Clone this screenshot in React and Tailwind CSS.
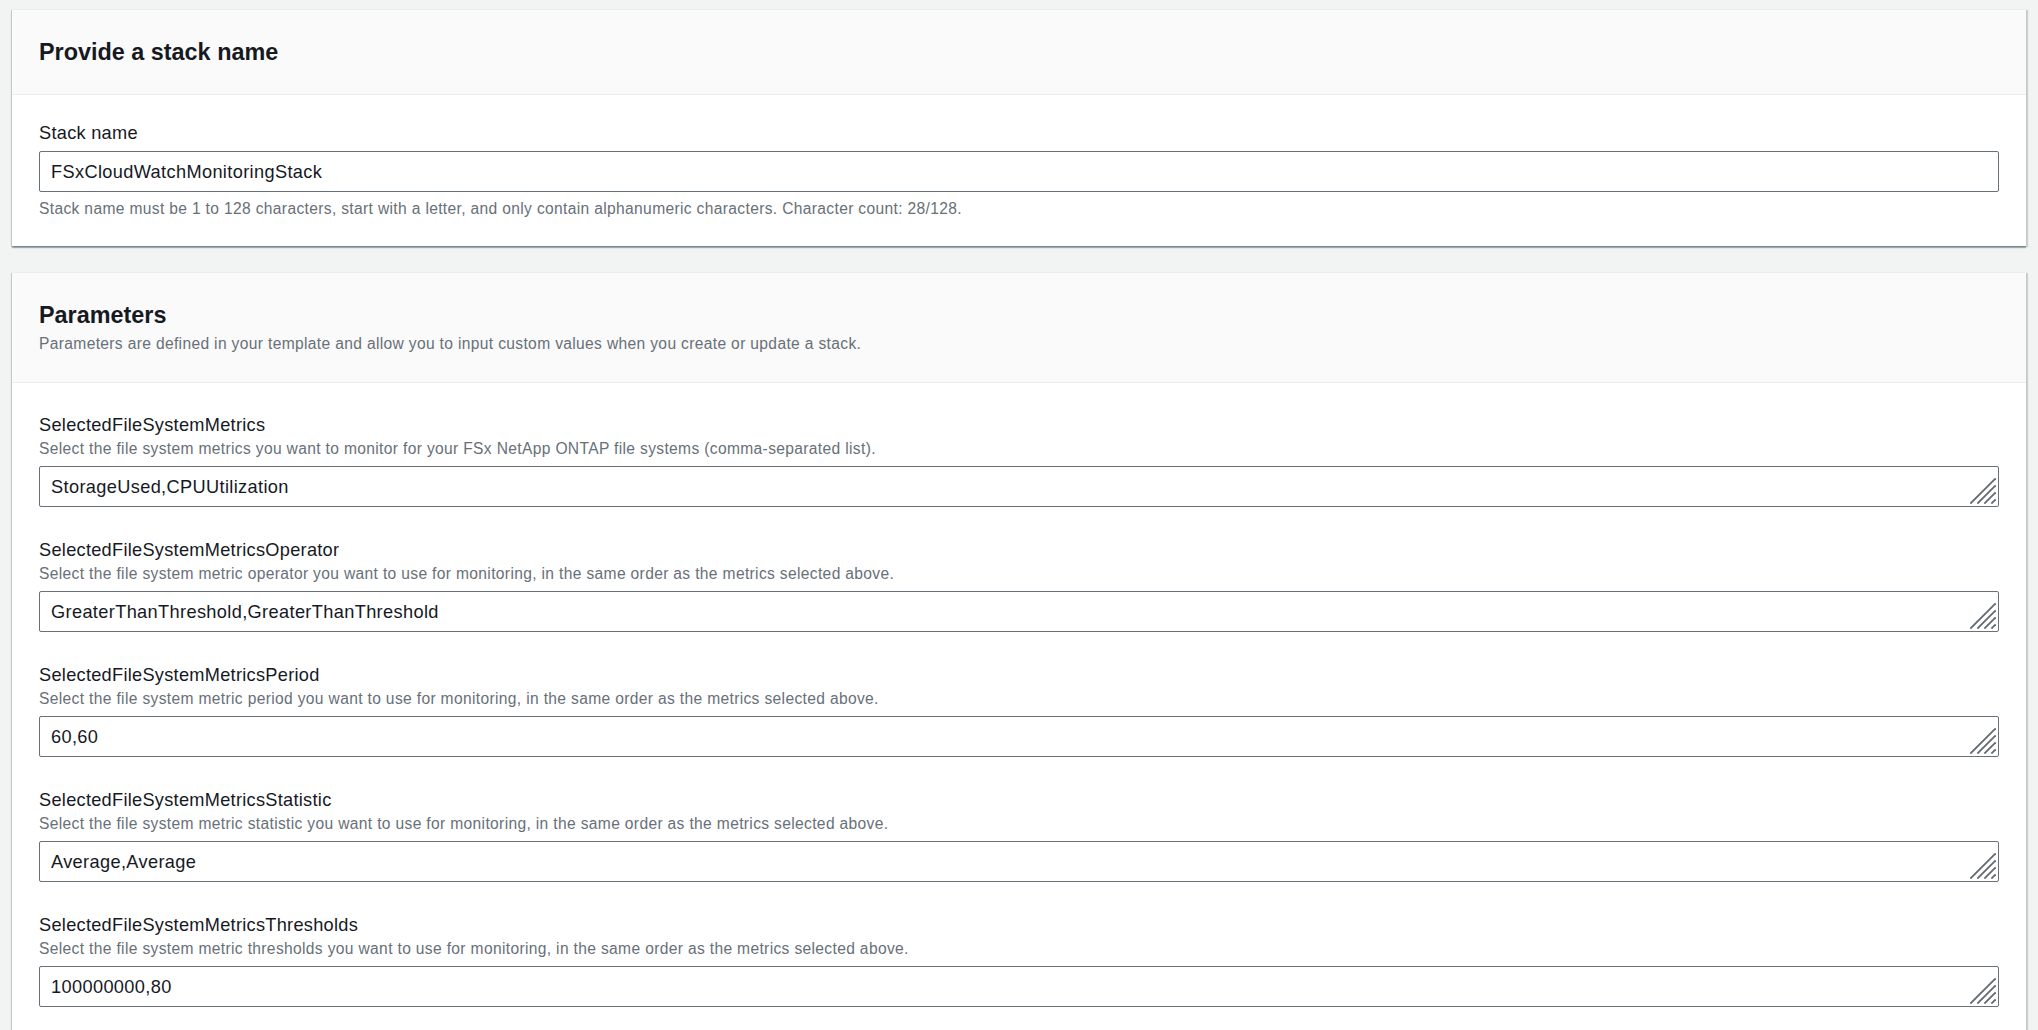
import React from 'react';

const fields = [
  {
    name: 'SelectedFileSystemMetrics',
    description:
      'Select the file system metrics you want to monitor for your FSx NetApp ONTAP file systems (comma-separated list).',
    value: 'StorageUsed,CPUUtilization',
  },
  {
    name: 'SelectedFileSystemMetricsOperator',
    description:
      'Select the file system metric operator you want to use for monitoring, in the same order as the metrics selected above.',
    value: 'GreaterThanThreshold,GreaterThanThreshold',
  },
  {
    name: 'SelectedFileSystemMetricsPeriod',
    description:
      'Select the file system metric period you want to use for monitoring, in the same order as the metrics selected above.',
    value: '60,60',
  },
  {
    name: 'SelectedFileSystemMetricsStatistic',
    description:
      'Select the file system metric statistic you want to use for monitoring, in the same order as the metrics selected above.',
    value: 'Average,Average',
  },
  {
    name: 'SelectedFileSystemMetricsThresholds',
    description:
      'Select the file system metric thresholds you want to use for monitoring, in the same order as the metrics selected above.',
    value: '100000000,80',
  },
];

const cardClass =
  'bg-white border-t border-[#eaeded] shadow-[0_2px_1px_0_rgba(0,28,36,0.3),2px_1px_1px_0_rgba(0,28,36,0.15),-1px_1px_1px_0_rgba(0,28,36,0.15)]';

const labelClass = 'text-[18.2px] leading-[22px] tracking-[0.28px] text-[#16191f]';
const hintClass = 'text-[15.6px] leading-[20px] tracking-[0.34px] text-[#687078]';

// little hatch drawn in the corner of the textareas
const ResizeGrip = () => (
  <svg
    className="absolute right-[2px] bottom-[2px] pointer-events-none"
    width="26"
    height="26"
    viewBox="0 0 26 26"
  >
    <g stroke="#646b73" strokeWidth="1.8" strokeLinecap="square">
      <line x1="1" y1="25" x2="25" y2="1" />
      <line x1="8" y1="25" x2="25" y2="8" />
      <line x1="15" y1="25" x2="25" y2="15" />
      <line x1="22" y1="25" x2="25" y2="22" />
    </g>
  </svg>
);

const TextBox = ({ value, grip }) => (
  <div className="relative h-[41px] w-full rounded-[2px] border border-[#687078] bg-white pl-[11px] flex items-center text-[18.2px] leading-[22px] tracking-[0.36px] text-[#16191f]">
    {value}
    {grip && <ResizeGrip />}
  </div>
);

const App = () => {
  return (
    <div
      className="min-h-screen bg-[#f2f3f3] px-[12px] pt-[9px] pb-10 flex flex-col gap-[26px]"
      style={{ fontFamily: '"Liberation Sans", Arial, sans-serif' }}
    >
      {/* Stack name */}
      <section className={cardClass}>
        <div className="bg-[#fafafa] border-b border-[#eaeded] px-[27px] pt-[27px] pb-[27px]">
          <h2 className="text-[23.4px] leading-[30px] font-bold text-[#16191f]">
            Provide a stack name
          </h2>
        </div>
        <div className="px-[27px] pt-[27px] pb-[27px]">
          <div className={labelClass}>Stack name</div>
          <div className="mt-[7px]">
            <TextBox value="FSxCloudWatchMonitoringStack" />
          </div>
          <p className={`mt-[7px] ${hintClass}`}>
            Stack name must be 1 to 128 characters, start with a letter, and only contain
            alphanumeric characters. Character count: 28/128.
          </p>
        </div>
      </section>

      {/* Parameters */}
      <section className={cardClass}>
        <div className="bg-[#fafafa] border-b border-[#eaeded] px-[27px] pt-[27px] pb-[28px]">
          <h2 className="text-[23.4px] leading-[30px] font-bold text-[#16191f]">Parameters</h2>
          <p className={`mt-[4px] ${hintClass}`}>
            Parameters are defined in your template and allow you to input custom values when you
            create or update a stack.
          </p>
        </div>
        <div className="px-[27px] pt-[31px] pb-[32px] flex flex-col gap-[32px]">
          {fields.map(({ name, description, value }) => (
            <div key={name}>
              <div className={labelClass}>{name}</div>
              <p className={`mt-[3px] ${hintClass}`}>{description}</p>
              <div className="mt-[7px]">
                <TextBox value={value} grip />
              </div>
            </div>
          ))}
        </div>
      </section>
    </div>
  );
};

export default App;
